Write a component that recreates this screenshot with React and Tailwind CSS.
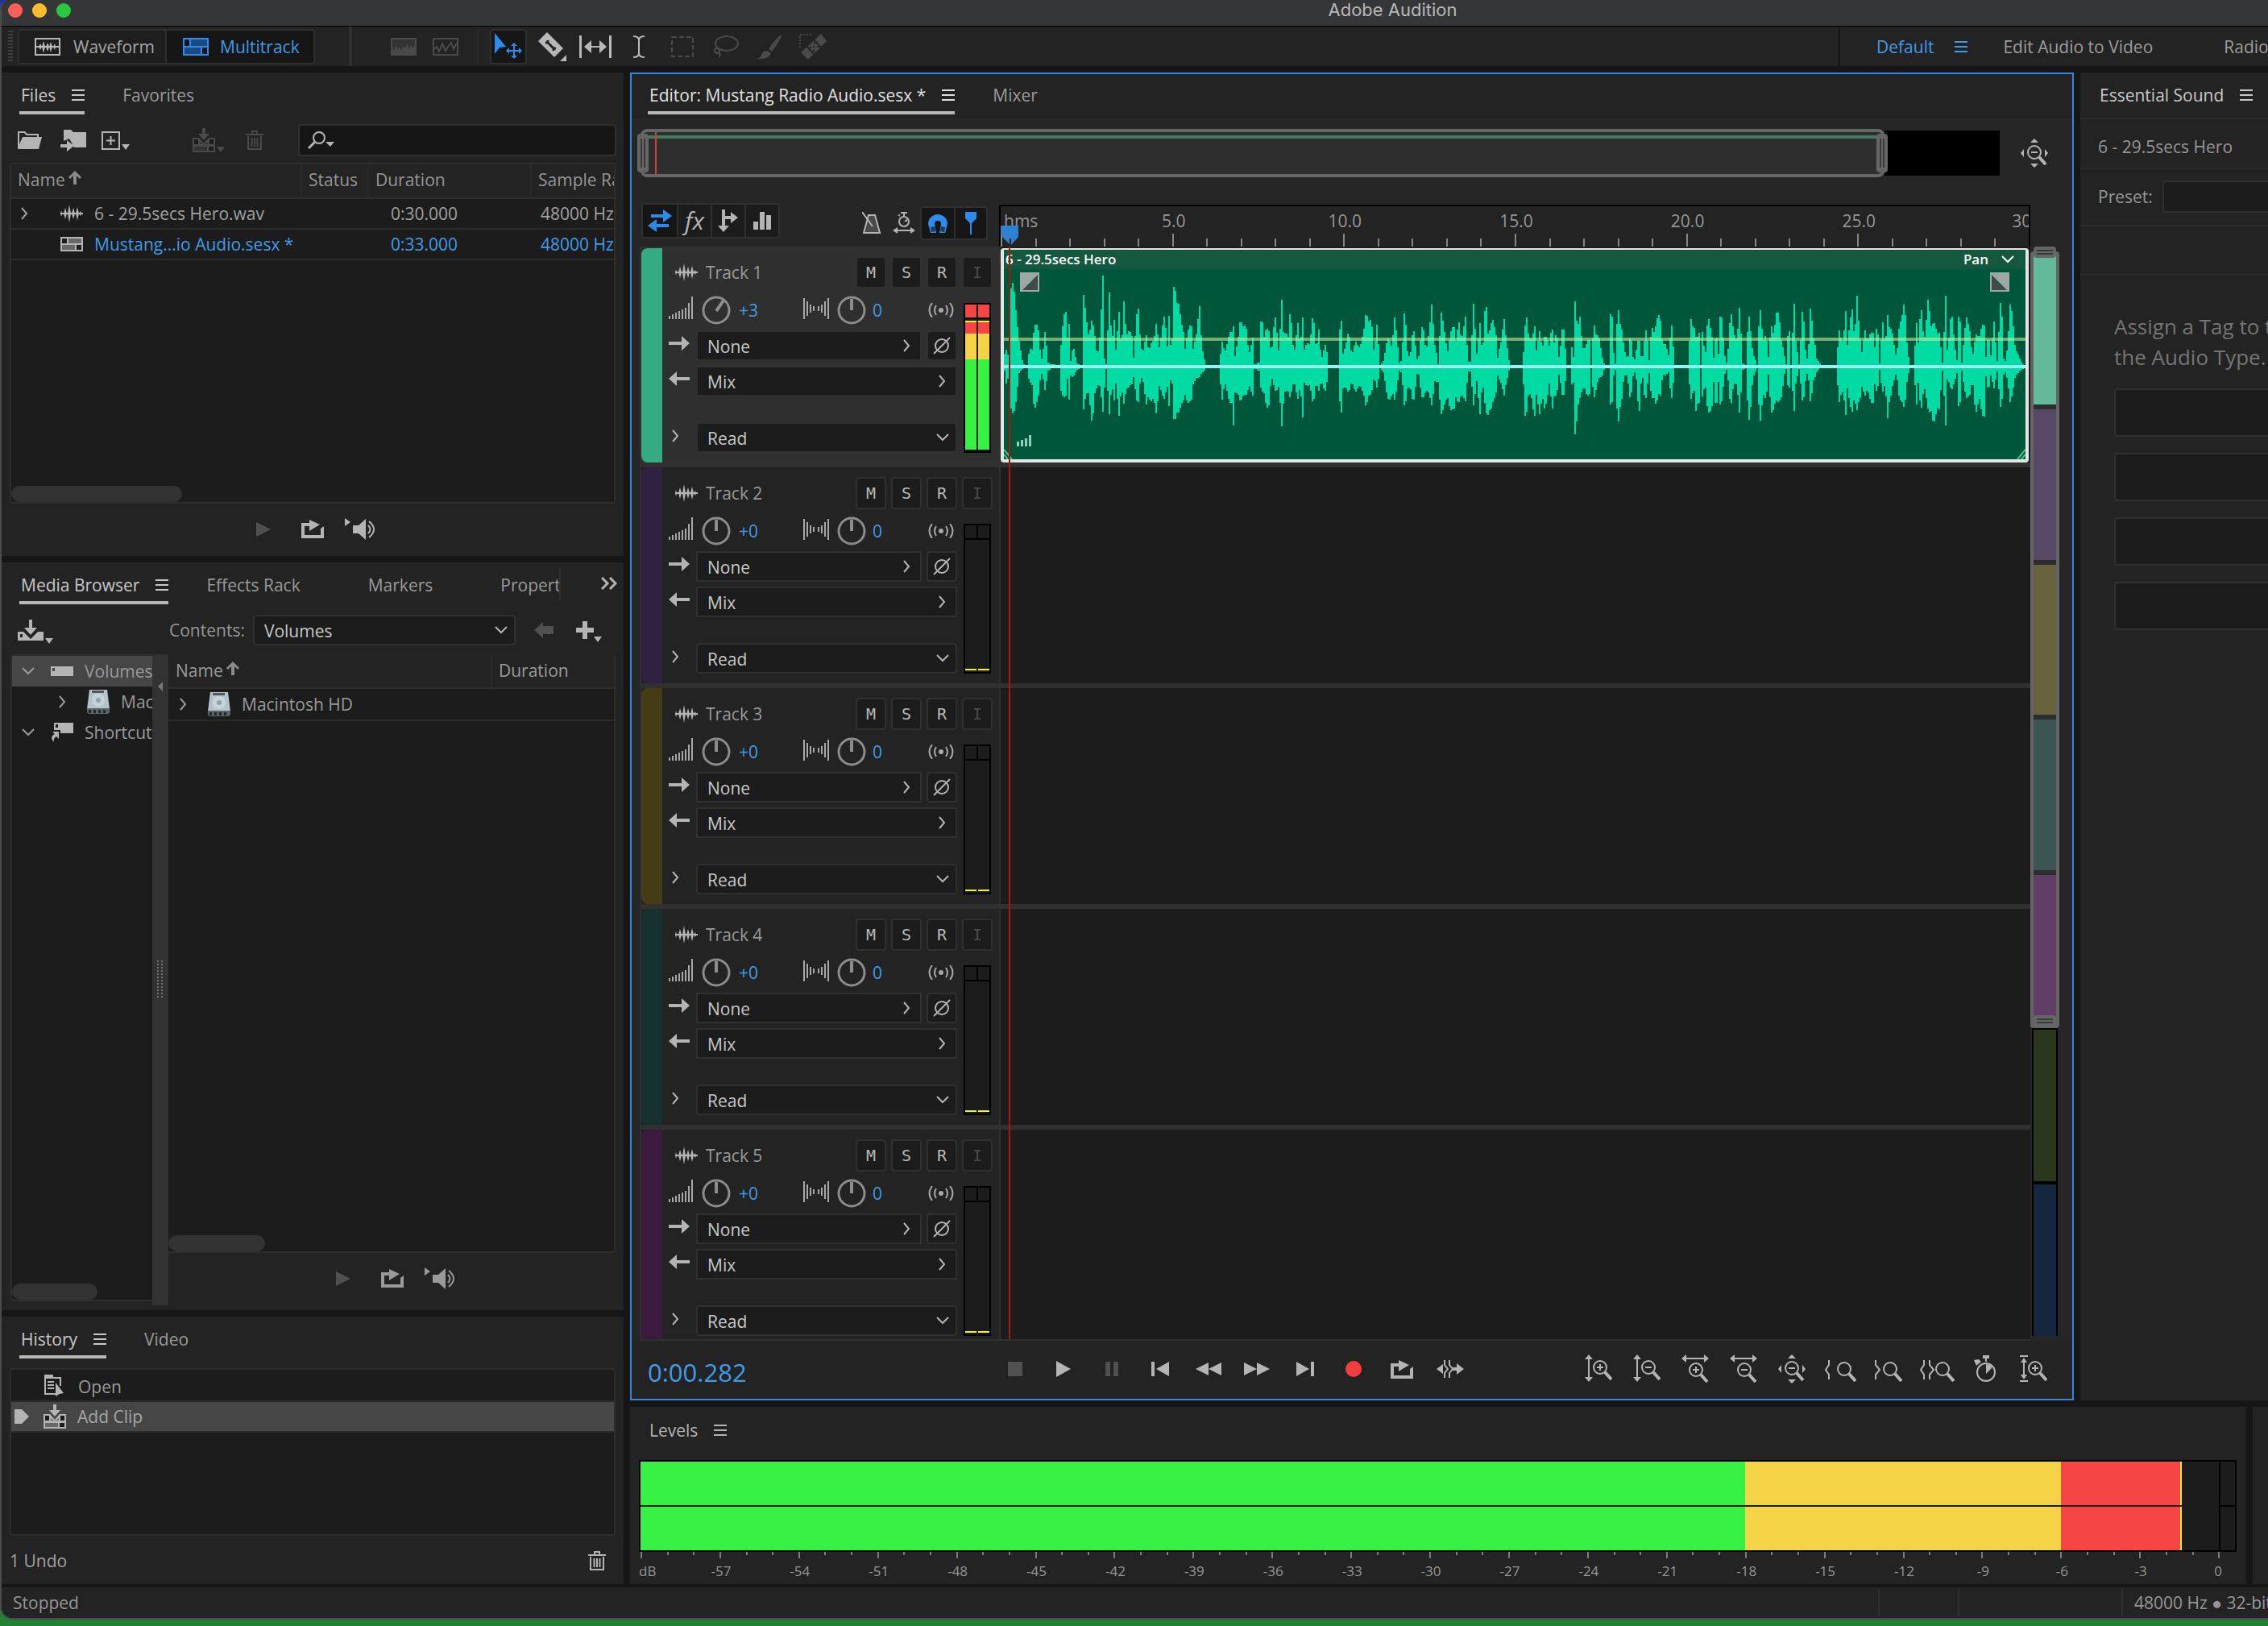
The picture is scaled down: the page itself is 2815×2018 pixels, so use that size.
import React from 'react';
import clsx from 'clsx';

const SANS = "font-['Open_Sans','Noto_Sans',sans-serif]";

// x, height above the centre line, height below it
const WAVE = [
    0, 18, 5, 2, 20, 20, 6, 8, 8, 8, 103, 55, 11, 95, 55, 15, 65, 42, 17, 35, 8, 23, 3, 2, 29, 1, 2, 31, 33, 30, 33, 8, 8,
    37, 55, 60, 39, 52, 45, 43, 40, 30, 45, 5, 6, 48, 20, 15, 51, 52, 34, 53, 5, 5, 59, 3, 2, 69, 1, 1, 70, 25, 28,
    75, 83, 45, 78, 33, 14, 80, 52, 40, 82, 8, 12, 85, 25, 12, 90, 4, 4, 96, 0, 0, 98, 88, 52, 101, 58, 30, 105, 40, 38,
    109, 57, 70, 112, 40, 35, 115, 8, 20, 118, 38, 25, 122, 105, 52, 124, 10, 25, 126, 3, 3, 130, 85, 55, 133, 33, 25,
    136, 55, 40, 138, 20, 20, 142, 70, 63, 145, 12, 20, 148, 87, 50, 151, 35, 25, 157, 50, 25, 160, 10, 12, 165, 82, 52,
    168, 38, 20, 171, 15, 12, 176, 38, 45, 179, 20, 40, 184, 32, 40, 188, 50, 55, 192, 25, 25, 199, 65, 40, 202, 25, 25,
    204, 58, 45, 207, 10, 3, 210, 95, 62, 214, 80, 58, 217, 82, 60, 219, 40, 35, 221, 58, 50, 224, 22, 35, 231, 62, 50,
    234, 20, 20, 238, 42, 15, 242, 70, 12, 245, 25, 8, 249, 3, 3, 251, 0, 0, 267, 0, 0, 269, 33, 45, 273, 18, 20,
    282, 48, 50, 284, 48, 70, 286, 12, 30, 292, 52, 40, 299, 52, 35, 303, 17, 25, 308, 33, 33, 310, 3, 3, 316, 5, 5,
    319, 83, 38, 321, 30, 25, 327, 55, 60, 331, 10, 10, 335, 68, 30, 340, 20, 25, 344, 78, 70, 347, 22, 30, 349, 63, 35,
    351, 20, 25, 355, 76, 40, 359, 10, 15, 364, 58, 43, 367, 20, 20, 370, 63, 65, 372, 22, 20, 379, 32, 25, 383, 63, 45,
    387, 20, 20, 390, 43, 28, 393, 10, 20, 399, 28, 30, 402, 0, 0, 414, 0, 0, 417, 73, 68, 420, 15, 25, 427, 42, 30,
    431, 15, 20, 437, 33, 32, 441, 20, 20, 448, 60, 45, 455, 58, 33, 458, 20, 15, 462, 50, 25, 466, 2, 2, 471, 8, 8,
    475, 38, 42, 480, 25, 35, 484, 60, 40, 490, 5, 5, 493, 8, 8, 497, 87, 63, 499, 20, 25, 503, 10, 25, 507, 48, 45,
    513, 3, 3, 519, 58, 45, 523, 15, 25, 530, 72, 45, 534, 30, 20, 538, 3, 18, 542, 72, 63, 545, 45, 45, 550, 20, 40,
    557, 58, 60, 560, 30, 35, 564, 60, 48, 567, 28, 30, 572, 65, 45, 575, 5, 5, 578, 6, 6, 582, 72, 45, 586, 18, 20,
    590, 50, 55, 593, 15, 20, 597, 82, 50, 600, 42, 62, 606, 55, 42, 609, 52, 42, 612, 10, 10, 620, 55, 33, 627, 0, 0,
    643, 0, 0, 646, 54, 65, 649, 59, 47, 651, 18, 20, 653, 55, 50, 655, 15, 30, 657, 61, 68, 660, 22, 38, 664, 41, 55,
    667, 25, 40, 670, 35, 50, 675, 33, 32, 677, 20, 12, 679, 58, 58, 681, 28, 40, 685, 42, 35, 688, 12, 10, 693, 53, 40,
    697, 12, 10, 698, 0, 0, 702, 0, 0, 705, 38, 35, 706, 12, 20, 708, 75, 78, 710, 54, 65, 714, 61, 38, 717, 22, 25,
    722, 27, 32, 726, 34, 35, 728, 0, 0, 731, 51, 35, 733, 45, 37, 737, 37, 13, 742, 12, 12, 745, 0, 0, 750, 0, 0,
    753, 92, 67, 755, 25, 15, 758, 4, 4, 761, 72, 70, 765, 53, 50, 768, 28, 18, 771, 13, 8, 774, 12, 20, 777, 43, 43,
    781, 2, 2, 785, 26, 20, 787, 42, 72, 791, 2, 2, 795, 46, 50, 797, 40, 25, 800, 8, 8, 803, 55, 43, 805, 35, 30,
    809, 58, 55, 811, 62, 30, 814, 55, 35, 817, 28, 10, 821, 25, 10, 825, 11, 6, 827, 58, 45, 831, 15, 12, 832, 0, 0,
    848, 0, 0, 852, 60, 40, 856, 45, 28, 858, 35, 52, 862, 42, 45, 864, 2, 2, 866, 41, 36, 870, 17, 25, 873, 62, 55,
    877, 48, 60, 880, 10, 18, 883, 47, 60, 886, 15, 18, 889, 81, 58, 892, 35, 25, 895, 0, 0, 897, 10, 8, 901, 66, 48,
    905, 45, 22, 909, 28, 20, 912, 77, 60, 916, 4, 4, 920, 2, 2, 923, 61, 60, 925, 54, 62, 929, 15, 12, 934, 2, 2,
    937, 75, 70, 941, 35, 38, 945, 38, 38, 948, 12, 10, 951, 52, 57, 955, 35, 48, 957, 72, 45, 961, 60, 40, 964, 35, 40,
    968, 12, 8, 970, 3, 3, 973, 62, 37, 976, 2, 2, 980, 82, 58, 982, 30, 20, 986, 3, 3, 991, 78, 48, 993, 30, 25,
    997, 3, 3, 1001, 94, 55, 1003, 28, 15, 1005, 38, 17, 1007, 12, 8, 1014, 0, 0, 1033, 0, 0, 1035, 45, 44, 1041, 30, 30,
    1044, 66, 58, 1046, 30, 30, 1052, 70, 55, 1055, 35, 40, 1058, 82, 50, 1062, 35, 40, 1065, 8, 15, 1067, 55, 43,
    1071, 28, 25, 1077, 50, 54, 1080, 22, 20, 1083, 60, 35, 1086, 4, 4, 1090, 58, 33, 1093, 22, 20, 1096, 62, 62,
    1102, 38, 22, 1107, 11, 8, 1111, 55, 42, 1117, 75, 48, 1121, 18, 12, 1124, 0, 0, 1128, 0, 0, 1132, 50, 44,
    1134, 30, 20, 1137, 77, 55, 1141, 30, 25, 1146, 77, 48, 1151, 50, 65, 1153, 52, 65, 1160, 40, 50, 1164, 5, 5,
    1168, 82, 68, 1170, 20, 15, 1175, 67, 28, 1179, 30, 20, 1182, 8, 8, 1185, 83, 65, 1188, 5, 5, 1194, 65, 42,
    1199, 35, 30, 1201, 12, 15, 1205, 36, 55, 1210, 40, 42, 1216, 53, 65, 1218, 12, 12, 1221, 40, 30, 1224, 15, 12,
    1228, 52, 25, 1232, 8, 6, 1237, 90, 57, 1240, 10, 10, 1243, 5, 5, 1248, 76, 44, 1251, 58, 30, 1255, 20, 10,
    1264, 3, 3, 1268, 0, 0,
];

const wavePath = () => {
    let d = '';
    let i = 0;
    for (let x = 0; x < 1268; x += 2) {
        while (i + 5 < WAVE.length && WAVE[i + 3] <= x) i += 3;
        const t = (x - WAVE[i]) / (WAVE[i + 3] - WAVE[i] || 1);
        const rough = 0.9 + 0.18 * Math.abs(Math.sin(x * 12.9898));
        const up = (WAVE[i + 1] + (WAVE[i + 4] - WAVE[i + 1]) * t) * rough;
        const down = (WAVE[i + 2] + (WAVE[i + 5] - WAVE[i + 2]) * t) * rough;
        d += `M${x + 1} ${Math.round(121 - up)}V${Math.round(121 + down)}`;
    }
    return d;
};

const Icon = ({ w, h, className, children }) => (
    <svg
        width={w}
        height={h}
        viewBox={`0 0 ${w} ${h}`}
        fill="currentColor"
        className={clsx('shrink-0', className)}
        aria-hidden="true"
    >
        {children}
    </svg>
);

const MenuIcon = ({ w = 16, className }) => (
    <Icon w={w} h={14} className={className}>
        <path d={`M0 0h${w}v2H0zM0 6h${w}v2H0zM0 12h${w}v2H0z`} />
    </Icon>
);

const ChevronDown = ({ className }) => (
    <Icon w={16} h={10} className={className}>
        <path d="M1 1l7 7 7-7" fill="none" stroke="currentColor" strokeWidth="2" />
    </Icon>
);

const ChevronRight = ({ className }) => (
    <Icon w={9} h={16} className={className}>
        <path d="M1 1l6 7-6 7" fill="none" stroke="currentColor" strokeWidth="2" />
    </Icon>
);

const SortArrow = () => (
    <Icon w={16} h={17} className="mb-1 text-[#8c8c8c]">
        <path d="M8 0l8 8-2 2-4-4v11H6V6l-4 4-2-2z" />
    </Icon>
);

const WaveIcon = () => (
    <Icon w={28} h={22}>
        <path d="M0 10h28v2H0z" />
        <path d="M0 11l1-4 1 4-1 4zM4 11l2-7 2 7-2 7zM9 11l2-11 2 11-2 11zM14 11l2-7 2 7-2 7zM19 11l2-8 2 8-2 8zM23 11l2-3 1 3-1 3z" />
    </Icon>
);

const SessionIcon = ({ w = 28, h = 18 }) => (
    <Icon w={w} h={h}>
        <path d={`M0 0h${w}v${h}H0z`} />
        <path d={`M2 2h6v${h / 2 - 3}H2zM${w - 8} ${h / 2 + 1}h6v${h / 2 - 3}h-6z`} fill="#1c1c1c" />
        <path d={`M10 2h${w - 12}v${h / 2 - 3}H10zM2 ${h / 2 + 1}h${w - 12}v${h / 2 - 3}H2z`} fill="#1c1c1c" fillOpacity="0.5" />
    </Icon>
);

const InsertClipIcon = () => (
    <Icon w={28} h={30}>
        <path d="M12 0h4v7h5l-7 8-7-8h5z" />
        <path d="M0 12h8l6 7 6-7h8v18H0z" />
        <path d="M2 14h5v6H2zM21 14h5v6h-5zM20 23h6v5h-6z" fill="#1c1c1c" />
        <path d="M2 23h16v5H2zM9 17l5 4 5-4v3H9z" fill="#1c1c1c" fillOpacity="0.5" />
    </Icon>
);

const TrashIcon = ({ className }) => (
    <Icon w={22} h={24} className={className}>
        <path d="M7 0h8v4h7v2H0V4h7zm2 2v2h4V2z" fillRule="evenodd" />
        <path d="M3 7v16h16V7M7.500 9v11M11 9v11M14.500 9v11" fill="none" stroke="currentColor" strokeWidth="2" />
    </Icon>
);

const LoopIcon = () => (
    <Icon w={28} h={23}>
        <path d="M0 4h10V0l13 6-13 8V8H4v11h20v-8l4-3v15H0z" />
    </Icon>
);

const Magnifier = ({ x = 0, y = 0, sign }) => (
    <g transform={`translate(${x} ${y})`} fill="none" stroke="currentColor">
        <circle cx="9" cy="9" r="8" strokeWidth="2" />
        <path d="M15 15l8 9" strokeWidth="4" />
        {sign && <path d={sign === '+' ? 'M5 9h8M9 5v8' : 'M5 9h8'} strokeWidth="2" />}
    </g>
);

const ZoomOutFull = () => (
    <Icon w={34} h={36}>
        <path d="M17 0l5 5H12zM17 36l5-5H12zM0 18l4-5v10zM34 18l-4-5v10z" />
        <Magnifier x={8} y={8} sign="-" />
    </Icon>
);

const DriveIcon = () => (
    <Icon w={28} h={30}>
        <path d="M3 0h22l3 24H0z" fill="#b4c2cb" />
        <path d="M0 23h28v5l-2 2H2l-2-2z" fill="#5b6469" />
        <path d="M6 1h15v3H6z" fill="#55565e" />
        <circle cx="14" cy="13" r="8" fill="#c6d3da" />
        <circle cx="14" cy="13" r="3" fill="#93a2ac" />
        <path d="M2 25h3v4H2zM8 25h3v4H8zM14 25h3v4h-3zM20 25h3v4h-3z" fill="#23272a" />
    </Icon>
);

const Triangle = ({ className }) => (
    <Icon w={10} h={7} className={className}>
        <path d="M0 0h10L5 7z" />
    </Icon>
);

const Tabs = ({ items, bright }) => (
    <div className="flex h-14 shrink-0 items-start gap-[45px] overflow-hidden pl-[22px]">
        {items.map((item, i) => (
            <button
                key={item}
                type="button"
                className={clsx(
                    'flex shrink-0 items-center gap-5 border-b-4 pt-3.5 pb-1.5 pl-0.5 text-[21px] leading-7 whitespace-nowrap',
                    i === 0 ? 'border-[#b8b8b8]' : 'border-transparent pr-[37px] text-[#9a9a9a]',
                    i === 0 && (bright ? 'text-[#e0e0e0]' : 'text-[#c8c8c8]')
                )}
            >
                {item}
                {i === 0 && <MenuIcon />}
            </button>
        ))}
    </div>
);

const Preview = () => (
    <div className="flex h-[65px] shrink-0 items-center justify-center pb-0.5 pl-2.5">
        <button type="button" aria-label="Play" className="text-[#505050]">
            <Icon w={18} h={18}><path d="M0 0l18 9-18 9z" /></Icon>
        </button>
        <button type="button" aria-label="Loop" className="ml-[38px]"><LoopIcon /></button>
        <button type="button" aria-label="Auto-play" className="ml-[26px]">
            <Icon w={40} h={27}>
                <path d="M0 0l7 5-7 5zM10 9h7l9-8v26l-9-8h-7z" />
                <path d="M29 9q5 5 0 10M30 4q12 10 0 20" fill="none" stroke="currentColor" strokeWidth="2" />
            </Icon>
        </button>
    </div>
);

const Dropdown = ({ label, value, popup, rounded, className }) => (
    <div className={clsx('relative', className)}>
        <select
            aria-label={label}
            defaultValue={value}
            className={clsx(
                'h-[38px] w-full appearance-none border-2 border-[#303030] bg-[#1c1c1c] pt-0.5 pl-3 text-[21px] leading-7 text-[#c8c8c8]',
                rounded && 'rounded'
            )}
        >
            <option>{value}</option>
        </select>
        <span className="pointer-events-none absolute inset-y-0 right-2.5 flex items-center">
            {popup ? <ChevronRight className="mr-1" /> : <ChevronDown />}
        </span>
    </div>
);

const TopToolbar = () => {
    const tools = [
        ['Move', <Icon w={34} h={34}><path d="M0 0l14 17-8 1-6 8zM24 12l4 4h-3v5h5v-3l4 4-4 4v-3h-5v5h3l-4 4-4-4h3v-5h-5v3l-4-4 4-4v3h5v-5h-3z" /></Icon>],
        ['Razor', <Icon w={36} h={36}><path d="M12 0l20 20-11 11L1 11z" /><path d="M13 10v3l7 7h3M10 13h3M20 20v3" fill="none" stroke="#232323" strokeWidth="3" /><path d="M36 28v8h-8z" /></Icon>],
        ['Slip', <Icon w={40} h={28}><path d="M0 0h3v28H0zM37 0h3v28h-3zM6 14l9-8v7h10V6l9 8-9 8v-7H15v7z" /></Icon>],
        ['Time Selection', <Icon w={16} h={28}><path d="M1 1q7 0 7 5v16q0 5-7 5M15 1q-7 0-7 5M8 22q0 5 7 5" fill="none" stroke="currentColor" strokeWidth="2" /></Icon>],
        ['Marquee', <Icon w={28} h={26}><path d="M1 1h26v24H1z" fill="none" stroke="currentColor" strokeWidth="2" strokeDasharray="6 3" /></Icon>],
        ['Lasso', <Icon w={34} h={28}><ellipse cx="18" cy="10" rx="14" ry="9" fill="none" stroke="currentColor" strokeWidth="2" /><circle cx="6" cy="19" r="3" fill="none" stroke="currentColor" strokeWidth="2" /><path d="M7 21q4 2 2 6" fill="none" stroke="currentColor" strokeWidth="2" /></Icon>],
        ['Brush', <Icon w={32} h={32}><path d="M32 0q-2 8-13 22l-4-3Q24 5 32 0zM13 21l5 3q-2 8-18 7 5-1 6-5 2-5 7-5z" /></Icon>],
        ['Spot Healing', <Icon w={34} h={32}><path d="M27 0l7 9L11 32 2 23z" /><path d="M18 7l9 10M9 15l9 10" stroke="#232323" strokeWidth="2" /><path d="M18 11h2v2h-2zM22 15h2v2h-2zM13 16h2v2h-2zM17 20h2v2h-2zM17 15h2v2h-2z" fill="#232323" /><path d="M1 17V1h16" fill="none" stroke="currentColor" strokeWidth="2" strokeDasharray="2 2" /></Icon>],
    ];
    return (
        <div className="flex h-[49px] shrink-0 items-center overflow-hidden bg-[#232323] text-[21px] leading-7 whitespace-nowrap">
            <svg width="6" height="40" className="ml-2 shrink-0 text-[#3f3f3f]" aria-hidden="true">
                <path d="M3 0v40" stroke="currentColor" strokeWidth="6" strokeDasharray="2 2" />
            </svg>
            <div className="ml-1.5 flex h-11 shrink-0 rounded border-2 border-[#303030]">
                <button type="button" className="flex w-[181px] items-center gap-4 bg-[#1e1e1e] pl-[19px] text-[#a6a6a6]">
                    <Icon w={32} h={22} className="text-[#b8b8b8]">
                        <path d="M1 1h30v20H1z" fill="none" stroke="currentColor" strokeWidth="2" />
                        <path d="M2 10h28v2H2z" />
                        <path d="M5 11l2-4 2 4-2 4zM9 11l2-7 2 7-2 8zM14 11l2-5 2 5-2 6zM18 11l2-6 2 6-2 7zM23 11l2-4 1 4-1 4z" />
                    </Icon>
                    Waveform
                </button>
                <button type="button" className="flex w-[184px] items-center gap-3.5 border-l-2 border-[#303030] bg-[#161616] pl-5 text-[#3f9be6]">
                    <Icon w={32} h={22} className="text-[#2d8ceb]">
                        <path d="M0 0h32v22H0z" />
                        <path d="M2 2h6v8H2zM24 12h6v8h-6z" fill="#161616" />
                        <path d="M10 2h20v8H10zM2 12h20v8H2z" fill="#1a4a80" />
                    </Icon>
                    Multitrack
                </button>
            </div>
            <div className="ml-[42px] h-full w-1 shrink-0 bg-[#2f2f2f]" />
            <button type="button" aria-label="Spectral frequency" className="ml-12 text-[#4a4a4a]">
                <Icon w={32} h={22}>
                    <path d="M1 1h30v20H1z" fill="#333" stroke="currentColor" strokeWidth="2" />
                    <path d="M2 20v-9l2 5 2-7 3 6 2-4 2 5 3-6 2 4 2-8 3 8 2-6 2 5 3-4v11z" />
                </Icon>
            </button>
            <button type="button" aria-label="Spectral pitch" className="ml-5 text-[#4a4a4a]">
                <Icon w={32} h={22}>
                    <path d="M1 1h30v20H1zM2 14l3-3 3 6 4-10 4 9 3-5 4-5 3 8 4-8" fill="none" stroke="currentColor" strokeWidth="2" />
                </Icon>
            </button>
            <div className="ml-[23px] h-[41px] w-0.5 shrink-0 bg-[#2b2b2b]" />
            <div className="ml-2.5 flex">
                {tools.map(([name, icon], i) => (
                    <button
                        key={name}
                        type="button"
                        aria-label={name}
                        className={clsx(
                            'mx-1 flex h-11 w-[46px] items-center justify-center rounded border-2',
                            i === 0 ? 'border-[#303030] bg-[#161616] text-[#2d8ceb]' : 'border-transparent',
                            i > 3 ? 'text-[#4a4a4a]' : i > 0 && 'text-[#b8b8b8]'
                        )}
                    >
                        {icon}
                    </button>
                ))}
            </div>
            <nav className="ml-auto flex h-full w-[533px] shrink-0 items-center overflow-hidden border-l-2 border-[#161616] pl-[45px] text-[#9c9c9c]">
                <a href="#default" className="text-[#3f9be6]">Default</a>
                <MenuIcon className="ml-[26px] text-[#3f9be6]" />
                <a href="#video" className="ml-11">Edit Audio to Video</a>
                <a href="#radio" className="ml-[88px]">Radio Production</a>
            </nav>
        </div>
    );
};

const FilesPanel = () => (
    <section className="flex h-[600px] shrink-0 flex-col bg-[#232323]">
        <Tabs items={['Files', 'Favorites']} />
        <div className="flex h-14 shrink-0 items-center pr-[9px] pl-5">
            <button type="button" aria-label="Open file">
                <Icon w={30} h={22}><path d="M0 0h9l3 3h14v4h-2V5H11L8 2H2v14L6 7h24l-4 15H0z" /></Icon>
            </button>
            <button type="button" aria-label="Import file" className="ml-[23px]">
                <Icon w={32} h={27}><path d="M4 0h9l3 3h16v19H17l-1-2-5-9-7 3zM0 18h8v-5l9 7-9 7v-5H0z" /></Icon>
            </button>
            <button type="button" aria-label="New file" className="ml-[19px] flex items-end gap-0.5">
                <Icon w={23} h={23}><path d="M1 1h21v21H1zM6 11.500h11M11.500 6v11" fill="none" stroke="currentColor" strokeWidth="2" /></Icon>
                <Triangle />
            </button>
            <button type="button" aria-label="Insert into multitrack" className="ml-[78px] flex items-end gap-0.5 text-[#4a4a4a]">
                <InsertClipIcon />
                <Triangle />
            </button>
            <button type="button" aria-label="Delete" className="ml-[26px] text-[#4a4a4a]"><TrashIcon /></button>
            <div className="relative ml-[43px] flex-1">
                <input type="text" aria-label="Search files" className="h-10 w-full rounded border-2 border-[#303030] bg-[#161616] pl-14 text-[21px]" />
                <span className="pointer-events-none absolute inset-y-0 left-3 flex items-center">
                    <Icon w={34} h={22}>
                        <circle cx="14" cy="8" r="7" fill="none" stroke="currentColor" strokeWidth="2" />
                        <path d="M9 13l-8 8" stroke="currentColor" strokeWidth="3" />
                        <path d="M22 13h11l-5 6z" />
                    </Icon>
                </span>
            </div>
        </div>
        <div className="mx-2.5 flex min-h-0 flex-1 flex-col overflow-hidden rounded border-2 border-[#2e2e2e] bg-[#1c1c1c] text-[21px] leading-7">
            <table className="w-full table-fixed text-left whitespace-nowrap">
                <colgroup>
                    <col className="w-[360px]" />
                    <col className="w-[83px]" />
                    <col className="w-[202px]" />
                    <col />
                </colgroup>
                <thead>
                    <tr className="h-[42px] border-b-2 border-[#2e2e2e] bg-[#232323] text-[#969696]">
                        <th className="pb-1 pl-2 font-normal"><span className="flex items-center gap-1">Name <SortArrow /></span></th>
                        <th className="border-l-2 border-[#2a2a2a] pb-1 pl-2 font-normal">Status</th>
                        <th className="border-l-2 border-[#2a2a2a] pb-1 pl-2 font-normal">Duration</th>
                        <th className="overflow-hidden border-l-2 border-[#2a2a2a] pb-1 pl-2 font-normal">Sample Rate</th>
                    </tr>
                </thead>
                <tbody className="text-[#a0a0a0]">
                    <tr className="h-[38px] border-b-2 border-[#2a2a2a]">
                        <td className="pl-3">
                            <span className="flex items-center">
                                <ChevronRight /><span className="mr-3.5 ml-10 text-[#b4b4b4]"><WaveIcon /></span>6 - 29.5secs Hero.wav
                            </span>
                        </td>
                        <td />
                        <td className="pl-7">0:30.000</td>
                        <td className="overflow-hidden pl-3">48000 Hz</td>
                    </tr>
                    <tr className="h-[38px] border-b-2 border-[#2a2a2a] text-[#3f9be6]">
                        <td className="pl-[61px]">
                            <span className="flex items-center">
                                <span className="mr-3.5 text-[#b4b4b4]"><SessionIcon /></span>Mustang...io Audio.sesx *
                            </span>
                        </td>
                        <td />
                        <td className="pl-7">0:33.000</td>
                        <td className="overflow-hidden pl-3">48000 Hz</td>
                    </tr>
                </tbody>
            </table>
            <div className="mt-auto h-5 w-[212px] rounded-full bg-[#323232]" />
        </div>
        <Preview />
    </section>
);

const MediaBrowser = () => (
    <section className="flex min-h-0 flex-1 flex-col bg-[#232323]">
        <div className="flex shrink-0 items-start justify-between pr-2">
            <div className="flex w-[692px] overflow-hidden">
                <Tabs items={['Media Browser', 'Effects Rack', 'Markers', 'Properties']} />
            </div>
            <div className="mt-2 h-10 w-0.5 bg-[#303030]" />
            <button type="button" aria-label="More panels" className="mt-[18px] ml-auto">
                <Icon w={20} h={16}><path d="M1 1l7 7-7 7M11 1l7 7-7 7" fill="none" stroke="currentColor" strokeWidth="3" /></Icon>
            </button>
        </div>
        <div className="flex h-[58px] shrink-0 items-center pb-0.5 pl-5 text-[21px] leading-7">
            <button type="button" aria-label="Import" className="flex items-end gap-0.5">
                <Icon w={32} h={26}><path d="M14 0h4v10h6l-8 9-8-9h6zM0 15h7l9 9 9-9h7v11H0zM3 18v4h3v-4z" fillRule="evenodd" /></Icon>
                <Triangle className="-mb-1" />
            </button>
            <span className="ml-36 text-[#969696]">Contents:</span>
            <Dropdown label="Contents" value="Volumes" rounded className="ml-2.5 w-[326px]" />
            <button type="button" aria-label="Back" className="ml-[23px] text-[#505050]">
                <Icon w={24} h={20}><path d="M0 10L11 0v5h13v10H11v5z" /></Icon>
            </button>
            <button type="button" aria-label="Add shortcut" className="ml-7 flex items-end">
                <Icon w={22} h={22}><path d="M8 0h6v8h8v6h-8v8H8v-8H0V8h8z" /></Icon>
                <Triangle className="-mb-1" />
            </button>
        </div>
        <div className="mb-1.5 flex min-h-0 flex-1 pr-2.5 pl-[11px] text-[21px] leading-7 text-[#9a9a9a]">
            <div className="mb-[5px] flex w-[176px] flex-col overflow-hidden rounded-l border-2 border-r-0 border-[#2e2e2e] bg-[#1c1c1c]">
                <ul className="whitespace-nowrap">
                    <li className="flex h-[38px] items-center bg-[#464646] pl-3">
                        <ChevronDown />
                        <span className="mr-3.5 ml-5 text-[#b4b4b4]"><Icon w={28} h={12}><path d="M0 0h28v12H0zM2 2v4h3V2z" fillRule="evenodd" /></Icon></span>
                        Volumes
                    </li>
                    <li className="flex h-[38px] items-center pl-[58px]">
                        <ChevronRight />
                        <span className="mr-3.5 ml-[26px]"><DriveIcon /></span>
                        Macintosh HD
                    </li>
                    <li className="flex h-[38px] items-center pl-3">
                        <ChevronDown />
                        <span className="mr-3.5 ml-5 text-[#b4b4b4]">
                            <Icon w={28} h={24}>
                                <path d="M4 0h24v13H12V9H4zM6 2v4h3V2z" fillRule="evenodd" />
                                <path d="M2 11h8v9l-3-3q-4 2-3 7-6-6 1-10z" />
                            </Icon>
                        </span>
                        Shortcuts
                    </li>
                </ul>
                <div className="mt-auto h-5 w-[106px] rounded-full bg-[#323232]" />
            </div>
            <div className="flex w-5 shrink-0 flex-col items-center bg-[#323232] pb-12">
                <Icon w={6} h={12} className="mt-[34px] text-[#777]"><path d="M6 0v12L0 6z" /></Icon>
                <svg width="8" height="46" className="my-auto text-[#707070]" aria-hidden="true">
                    <path d="M1 0v46M6 0v46" stroke="currentColor" strokeWidth="2" strokeDasharray="2 2" />
                </svg>
            </div>
            <div className="flex min-w-0 flex-1 flex-col">
                <div className="flex min-h-0 flex-1 flex-col rounded-r border-r-2 border-b-2 border-[#2e2e2e] bg-[#1c1c1c]">
                    <table className="w-full table-fixed text-left whitespace-nowrap">
                        <colgroup>
                            <col className="w-[401px]" />
                            <col />
                        </colgroup>
                        <thead>
                            <tr className="h-[42px] border-b-2 border-[#2e2e2e] bg-[#232323]">
                                <th className="pb-0.5 pl-[9px] font-normal"><span className="flex items-center gap-1">Name <SortArrow /></span></th>
                                <th className="border-l-2 border-[#2a2a2a] pb-0.5 pl-2 font-normal">Duration</th>
                            </tr>
                        </thead>
                        <tbody>
                            <tr className="h-10 border-b-2 border-[#2a2a2a]">
                                <td className="pl-3.5">
                                    <span className="flex items-center">
                                        <ChevronRight /><span className="mr-3.5 ml-[26px]"><DriveIcon /></span>Macintosh HD
                                    </span>
                                </td>
                                <td />
                            </tr>
                        </tbody>
                    </table>
                    <div className="mt-auto h-5 w-[120px] rounded-full bg-[#323232]" />
                </div>
                <Preview />
            </div>
        </div>
    </section>
);

const HistoryPanel = () => (
    <section className="flex h-[332px] shrink-0 flex-col bg-[#232323]">
        <Tabs items={['History', 'Video']} />
        <ul className="mx-2.5 mt-2 flex-1 rounded border-2 border-[#2e2e2e] bg-[#1c1c1c] text-[21px] leading-7 text-[#9a9a9a]">
            <li className="flex h-10 items-center border-b-2 border-[#2a2a2a] pt-1 pl-[41px]">
                <Icon w={26} h={27} className="mr-4 mb-1 text-[#b4b4b4]">
                    <path d="M0 0h11v3h10v11h-2V5H2v18h12v2H0z" />
                    <path d="M4 8h8v2H4zM4 12h8v2H4zM4 16h8v2H4zM14 10l10 13-5 1-5 3z" />
                </Icon>
                Open
            </li>
            <li className="flex h-[38px] items-center border-b-2 border-[#2a2a2a] bg-[#464646] pl-1 font-medium text-[#a6a6a6]">
                <Icon w={18} h={18} className="mr-[18px] text-[#b4b4b4]"><path d="M0 0h9l9 9-9 9H0z" /></Icon>
                <span className="mr-3.5 text-[#b4b4b4]"><InsertClipIcon /></span>
                Add Clip
            </li>
        </ul>
        <div className="flex h-[60px] shrink-0 items-center justify-between pt-0.5 pr-[22px] pl-2.5 text-[21px] leading-7 text-[#a0a0a0]">
            1 Undo
            <button type="button" aria-label="Delete history" className="text-[#b4b4b4]"><TrashIcon /></button>
        </div>
    </section>
);

const Knob = ({ label, turned }) => (
    <button type="button" aria-label={label} className="text-[#8c8c8c]">
        <Icon w={36} h={36}>
            <circle cx="18" cy="18" r="16" fill="none" stroke="currentColor" strokeWidth="3" />
            <path d={turned ? 'M18 19l9-13' : 'M18 18V4'} stroke="currentColor" strokeWidth="4" />
        </Icon>
    </button>
);

const TrackMeter = ({ active }) => (
    <div className="flex h-[186px] w-[34px] flex-col border-2 border-black bg-[#1c1c1c]">
        <div className="flex h-[18px] shrink-0 border-b-2 border-black">
            <div className={clsx('flex-1 border-r-2 border-black', active && 'bg-[#f54545]')} />
            <div className={clsx('flex-1', active && 'bg-[#f54545]')} />
        </div>
        {active ? (
            <div className="mt-0.5 flex flex-1 gap-0.5 pb-0.5">
                {[0, 1].map((c) => (
                    <div key={c} className="flex flex-1 flex-col">
                        <div className="h-0.5 bg-[#f7f032]" />
                        <div className="h-3.5 bg-[#f54545]" />
                        <div className="h-8 bg-[#f4d346]" />
                        <div className="flex-1 bg-[#36f044]" />
                    </div>
                ))}
            </div>
        ) : (
            <div className="mt-auto mb-0.5 flex gap-0.5">
                <div className="h-0.5 flex-1 bg-[#f7f032]" />
                <div className="h-0.5 flex-1 bg-[#f7f032]" />
            </div>
        )}
    </div>
);

const TrackHead = ({ track }) => (
    <div
        className={clsx(
            'flex w-[448px] shrink-0 border-x-2 border-[#303030]',
            track.active ? 'bg-[#2f2f2f]' : 'bg-[#232323]'
        )}
    >
        <div className={clsx('w-[26px] shrink-0 rounded-l-lg', track.active && 'mt-0.5', track.strip)} />
        <div className="flex flex-1 flex-col pt-3 pr-2 pl-2">
            <div className="flex h-10 items-center">
                <span className="ml-2 text-[#b4b4b4]"><WaveIcon /></span>
                <span className="ml-2.5 text-[21px] leading-7 text-[#999]">{track.name}</span>
                <div className="ml-auto flex gap-1.5">
                    {['M', 'S', 'R', 'I'].map((b) => (
                        <button
                            key={b}
                            type="button"
                            className={clsx(
                                "h-10 w-[38px] rounded border-2 border-[#303030] bg-[#1c1c1c] font-['DejaVu_Sans_Mono',monospace] text-xl",
                                b === 'I' ? 'text-[#4a4a4a]' : 'text-[#b8b8b8]'
                            )}
                        >
                            {b}
                        </button>
                    ))}
                </div>
            </div>
            <div className="flex">
                <div className="flex-1 pr-2">
                    <div className="mt-[9px] flex h-9 items-center text-[21px] leading-7 text-[#3f9be6]">
                        <Icon w={30} h={28} className="mb-1.5 text-[#a8a8a8]">
                            <path d="M0 24h2v4H0zM4 22h2v6H4zM8 20h2v8H8zM12 18h2v10h-2zM16 16h2v12h-2zM20 14h2v14h-2zM24 8h2v20h-2zM28 0h2v28h-2z" />
                        </Icon>
                        <span className="ml-[11px] flex"><Knob label={`${track.name} volume`} turned={track.active} /></span>
                        <span className="ml-2.5 w-20">{track.volume}</span>
                        <Icon w={32} h={26} className="mb-1 text-[#a8a8a8]">
                            <path d="M0 0h2v26H0zM4 4h2v18H4zM8 8h2v10H8zM12 10h2v6h-2zM18 10h2v6h-2zM22 8h2v10h-2zM26 4h2v18h-2zM30 0h2v26h-2z" />
                        </Icon>
                        <span className="ml-2.5 flex"><Knob label={`${track.name} pan`} /></span>
                        <span className="ml-2">0</span>
                        <Icon w={32} h={18} className="mr-1 ml-auto text-[#a8a8a8]">
                            <circle cx="16" cy="9" r="3" />
                            <path d="M10 3q-4 6 0 12M22 3q4 6 0 12M5 0q-7 9 0 18M27 0q7 9 0 18" fill="none" stroke="currentColor" strokeWidth="2" />
                        </Icon>
                    </div>
                    <div className="mt-[7px] flex items-center text-[#b4b4b4]">
                        <Icon w={26} h={18} className="mb-1.5"><path d="M0 7h16V0l10 9-10 9v-7H0z" /></Icon>
                        <Dropdown label={`${track.name} input`} value="None" popup className="ml-2 flex-1" />
                        <button type="button" aria-label="Invert phase" className="ml-1.5 flex h-[38px] w-[38px] items-center justify-center rounded border-2 border-[#303030] bg-[#1c1c1c]">
                            <Icon w={22} h={22}>
                                <circle cx="11" cy="11" r="8" fill="none" stroke="currentColor" strokeWidth="2" />
                                <path d="M1 21L21 1" stroke="currentColor" strokeWidth="2" />
                            </Icon>
                        </button>
                    </div>
                    <div className="mt-1.5 flex items-center text-[#b4b4b4]">
                        <Icon w={26} h={18} className="mb-1.5"><path d="M26 7H10V0L0 9l10 9v-7h16z" /></Icon>
                        <Dropdown label={`${track.name} output`} value="Mix" popup className="ml-2 flex-1" />
                    </div>
                    <div className="mt-8 flex items-center text-[#b4b4b4]">
                        <ChevronRight className="mb-1 ml-1" />
                        <Dropdown label={`${track.name} automation`} value="Read" rounded className="ml-[21px] flex-1" />
                    </div>
                </div>
                <div className="mt-[18px] mr-0.5"><TrackMeter active={track.active} /></div>
            </div>
        </div>
    </div>
);

const Clip = () => (
    <div className="flex flex-1 flex-col overflow-hidden rounded border-x-4 border-t-2 border-b-4 border-[#e2e6e4] bg-[#00563b]">
        <div className="flex h-6 items-center bg-[#14583f] px-0.5 text-[17px] leading-6 font-semibold text-white">
            6 - 29.5secs Hero
            <span className="mr-4 ml-auto">Pan</span>
            <ChevronDown className="mr-3" />
        </div>
        <div className="relative flex-1">
            <svg viewBox="0 0 1268 236" preserveAspectRatio="none" className="absolute inset-0 h-full w-full" aria-hidden="true">
                <path d={wavePath()} stroke="#00dba4" strokeWidth="2" fill="none" />
                <path d="M0 87h1268" stroke="#c8e896" strokeOpacity="0.6" strokeWidth="4" />
                <path d="M0 121h1268" stroke="#97f3f2" strokeWidth="4" />
                <path d="M0 224l10 12M0 230l5 6M1268 224l-10 12M1268 230l-5 6" stroke="#4fc193" strokeWidth="2" />
            </svg>
            <div className="absolute top-1 left-5 text-[#9ba8a3]">
                <Icon w={24} h={24}><path d="M0 0h24v24H0z" /><path d="M22 3v19H3z" fill="#3d4a45" /></Icon>
            </div>
            <div className="absolute top-1 right-5 text-[#9ba8a3]">
                <Icon w={24} h={24}><path d="M0 0h24v24H0z" /><path d="M2 3v19h19z" fill="#3d4a45" /></Icon>
            </div>
            <div className="absolute bottom-4 left-4 text-[#8fcfb4]">
                <Icon w={18} h={14}><path d="M0 8h3v6H0zM5 6h3v8H5zM10 4h3v10h-3zM15 0h3v14h-3z" /></Icon>
            </div>
        </div>
    </div>
);

const tracks = [
    { name: 'Track 1', volume: '+3', strip: 'bg-[#36aa82]', active: true },
    { name: 'Track 2', volume: '+0', strip: 'bg-[#2f2142]' },
    { name: 'Track 3', volume: '+0', strip: 'bg-[#433c14]' },
    { name: 'Track 4', volume: '+0', strip: 'bg-[#16302f]' },
    { name: 'Track 5', volume: '+0', strip: 'bg-[#3a1a3d]' },
];

const seconds = Array.from({ length: 30 }, (_, i) => i);

const Ruler = () => (
    <div className="relative h-[52px] flex-1 overflow-hidden border-2 border-b-0 border-black bg-[#232323] text-[21px] leading-7 text-[#969696]">
        <div className="flex h-full">
            {seconds.map((s) => (
                <div key={s} className="relative flex flex-1 items-end">
                    <div className={clsx('w-0.5 bg-[#868686]', s % 5 === 0 ? 'h-4' : 'h-2.5')} />
                    {s > 0 && s % 5 === 0 && (
                        <span className="absolute top-1 left-0.5 -translate-x-1/2">{s}.0</span>
                    )}
                    {s === 29 && <span className="absolute top-1 left-full -translate-x-1/2">30.0</span>}
                </div>
            ))}
        </div>
        <span className="absolute top-1 left-1">hms</span>
        <Icon w={22} h={24} className="absolute bottom-0.5 left-0 text-[#2f80d0]">
            <path d="M0 0h22v14l-9 10V16h-2v7L0 12z" />
        </Icon>
    </div>
);

const headTools = [
    <Icon w={30} h={28}><path d="M4 6h15V0l11 8-11 8v-6H4zM26 18H11v-6L0 20l11 8v-6h15z" /></Icon>,
    <span className="text-3xl leading-8 italic">fx</span>,
    <Icon w={26} h={28}><path d="M5 0h4v8h7V3l9 7-9 7v-5H9v8h5l-7 8-7-8h5z" /></Icon>,
    <Icon w={22} h={22}><path d="M0 12h6v10H0zM8 0h6v22H8zM16 4h6v18h-6z" /></Icon>,
];

const zoomTools = [
    <Icon w={34} h={36}><path d="M5 0l5 6H6v22h4l-5 6-5-6h4V6H0z" /><Magnifier x={10} y={7} sign="+" /></Icon>,
    <Icon w={34} h={36}><path d="M5 0l5 6H6v22h4l-5 6-5-6h4V6H0z" /><Magnifier x={10} y={7} sign="-" /></Icon>,
    <Icon w={34} h={36}><path d="M0 5l6-5v4h22V0l6 5-6 5V6H6v4z" /><Magnifier x={9} y={10} sign="+" /></Icon>,
    <Icon w={34} h={36}><path d="M0 5l6-5v4h22V0l6 5-6 5V6H6v4z" /><Magnifier x={9} y={10} sign="-" /></Icon>,
    <ZoomOutFull />,
    <Icon w={40} h={32}><path d="M6 5v6l-4 6 4 6v6" fill="none" stroke="currentColor" strokeWidth="2" /><Magnifier x={16} y={7} /></Icon>,
    <Icon w={36} h={32}><path d="M2 5v6l5 6-5 6v6" fill="none" stroke="currentColor" strokeWidth="2" /><Magnifier x={11} y={7} /></Icon>,
    <Icon w={44} h={32}><path d="M6 5v6l-4 6 4 6v6M13 5v6l5 6-5 6v6" fill="none" stroke="currentColor" strokeWidth="2" /><Magnifier x={20} y={7} /></Icon>,
    <Icon w={28} h={34}><circle cx="15" cy="21" r="11" fill="none" stroke="currentColor" strokeWidth="2" /><path d="M11 0h8v4h-3v4h-2V4h-3zM15 11q8 1 7 5l-7 7zM0 6l6-1 3 3-6 5z" /></Icon>,
    <Icon w={34} h={36}><path d="M0 1h10v2H0zM0 32h10v2H0zM5 4l4 6H6v15h3l-4 6-4-6h3V10H1z" /><Magnifier x={10} y={8} sign="+" /></Icon>,
];

const transport = [
    ['Stop', <Icon w={18} h={18}><path d="M0 0h18v18H0z" /></Icon>, 'text-[#505050]'],
    ['Play', <Icon w={18} h={20}><path d="M0 0l18 10L0 20z" /></Icon>],
    ['Pause', <Icon w={16} h={18}><path d="M0 0h6v18H0zM10 0h6v18h-6z" /></Icon>, 'text-[#505050]'],
    ['Go to start', <Icon w={22} h={18}><path d="M0 0h4v18H0zM22 0v18L6 9z" /></Icon>],
    ['Rewind', <Icon w={32} h={16}><path d="M16 0v16L0 8zM32 0v16L16 8z" /></Icon>],
    ['Fast forward', <Icon w={32} h={16}><path d="M0 0v16l16-8zM16 0v16l16-8z" /></Icon>],
    ['Go to end', <Icon w={22} h={18}><path d="M18 0h4v18h-4zM0 0v18l16-9z" /></Icon>],
    ['Record', <Icon w={20} h={20}><circle cx="10" cy="10" r="10" /></Icon>, 'text-[#f43d3d]'],
    ['Loop', <LoopIcon />],
    ['Skip selection', <Icon w={34} h={22}><path d="M10 0v6l4 5-4 5v6M16 0v6l4 5-4 5v6" fill="none" stroke="currentColor" strokeWidth="2" /><path d="M8 5v12l-8-6zM25 9V4l9 7-9 7v-5h-5V9z" /></Icon>],
];

const EditorPanel = () => (
    <section className="flex min-w-0 flex-1 flex-col bg-[#232323] ring-2 ring-[#3486dc] ring-inset">
        <Tabs items={['Editor: Mustang Radio Audio.sesx *', 'Mixer']} bright />
        <div className="mx-0.5 flex min-h-0 flex-1 flex-col bg-[#262626]">
            <div className="flex shrink-0 items-center pt-3.5 pr-[30px] pl-[11px]">
                <div className="flex h-[60px] flex-1">
                    <div className="relative flex-[1544] rounded-lg border-4 border-[#666] bg-[#2e2e2e]">
                        <div className="mx-1 mt-1 h-1 bg-[#467863]" />
                        <div className="absolute top-0 bottom-0 left-3.5 w-0.5 bg-[#d03c36]" />
                        <div className="absolute top-0.5 -left-2 flex h-12 w-3.5 justify-center gap-0.5 rounded bg-[#666] py-1.5">
                            <div className="w-0.5 bg-[#3a3a3a]" />
                            <div className="w-0.5 bg-[#3a3a3a]" />
                        </div>
                        <div className="absolute top-0.5 -right-2 z-10 flex h-12 w-3.5 justify-center gap-0.5 rounded bg-[#666] py-1.5">
                            <div className="w-0.5 bg-[#3a3a3a]" />
                            <div className="w-0.5 bg-[#3a3a3a]" />
                        </div>
                    </div>
                    <div className="my-0.5 flex-[144] bg-black" />
                </div>
                <button type="button" aria-label="Zoom out full" className="ml-[26px]"><ZoomOutFull /></button>
            </div>
            <div className="flex h-[86px] shrink-0 items-end pr-[52px] pl-2.5">
                <div className="flex w-[446px] shrink-0 items-center pb-2 pl-0.5">
                    <div className="flex h-11 rounded border-2 border-[#303030] bg-[#1c1c1c]">
                        {headTools.map((icon, i) => (
                            <button
                                key={i}
                                type="button"
                                aria-label={['Inputs and outputs', 'Effects', 'Sends', 'EQ'][i]}
                                className={clsx(
                                    'flex w-[42px] items-center justify-center',
                                    i === 0 ? 'bg-[#161616] text-[#2d8ceb]' : 'border-l-2 border-[#303030]'
                                )}
                            >
                                {icon}
                            </button>
                        ))}
                    </div>
                    <button type="button" aria-label="Metronome" className="mt-1.5 ml-auto">
                        <Icon w={24} h={28}><path d="M8 4h8l6 22H2z" fill="#4a4a4a" stroke="currentColor" strokeWidth="2" /><path d="M0 0l13 18" stroke="currentColor" strokeWidth="2" /></Icon>
                    </button>
                    <button type="button" aria-label="Time stretch" className="mt-1.5 mr-1.5 ml-3.5">
                        <Icon w={28} h={28}>
                            <circle cx="14" cy="12" r="6" fill="none" stroke="currentColor" strokeWidth="2" />
                            <path d="M10 0h8v2h-3v4h-2V2h-3zM0 23l6-4v3h16v-3l6 4-6 4v-3H6v3zM14 12l4-4v4zM6 4l3-1v3z" />
                        </Icon>
                    </button>
                    <div className="mt-1.5 mr-3.5 flex h-[42px] rounded border-2 border-[#303030] bg-[#161616] text-[#2d8ceb]">
                        <button type="button" aria-label="Snapping" className="flex w-10 items-center justify-center">
                            <Icon w={26} h={26}>
                                <path d="M1 14a12 12 0 0 1 24 0l-3 11h-7l2-11a4 4 0 0 0-8 0l2 11H4z" />
                                <path d="M4 18l5-1 1 6-5 1zM22 18l-5-1-1 6 5 1z" fill="#161616" fillOpacity="0.7" />
                            </Icon>
                        </button>
                        <button type="button" aria-label="Playhead" className="flex w-10 items-center justify-center border-l-2 border-[#303030]">
                            <Icon w={14} h={28}><path d="M0 0h14v8l-6 6v14H6V14L0 8z" /></Icon>
                        </button>
                    </div>
                </div>
                <Ruler />
            </div>
            <div className="flex min-h-0 flex-1 pl-2.5">
                <div className="relative min-w-0 flex-1 overflow-hidden border-b-2 border-[#303030]">
                    {tracks.map((track) => (
                        <div key={track.name} className="flex h-[274px] border-b-[6px] border-[#303030]">
                            <TrackHead track={track} />
                            <div className="flex flex-1 bg-[#1c1c1c] pr-0.5">
                                {track.active && <div className="flex flex-1 pt-0.5"><Clip /></div>}
                            </div>
                        </div>
                    ))}
                    <div className="absolute top-0 bottom-0 left-[458px] w-0.5 bg-[#ab1512]" />
                </div>
                <div className="flex w-[52px] shrink-0 flex-col pt-1.5">
                    <div className="relative flex h-[964px] w-9 shrink-0 flex-col gap-1.5 rounded border-4 border-[#646464] bg-[#2d2d2d]">
                        <div className="flex-1 bg-[#65b99b]" />
                        <div className="flex-1 bg-[#574868]" />
                        <div className="flex-1 bg-[#68613e]" />
                        <div className="flex-1 bg-[#3c5553]" />
                        <div className="flex-1 bg-[#613e65]" />
                        <div className="absolute -top-2.5 left-0 flex h-3.5 w-7 flex-col justify-center gap-0.5 rounded bg-[#666] px-1">
                            <div className="h-0.5 bg-[#3a3a3a]" />
                            <div className="h-0.5 bg-[#3a3a3a]" />
                        </div>
                        <div className="absolute -bottom-0.5 left-0 flex h-3.5 w-7 flex-col justify-center gap-0.5 rounded bg-[#666] px-1">
                            <div className="h-0.5 bg-[#3a3a3a]" />
                            <div className="h-0.5 bg-[#3a3a3a]" />
                        </div>
                    </div>
                    <div className="mb-1.5 ml-0.5 flex w-8 flex-1 flex-col gap-1 border-x-2 border-t-2 border-black bg-black">
                        <div className="flex-1 bg-[#2b361e]" />
                        <div className="flex-1 bg-[#14273e]" />
                    </div>
                </div>
            </div>
        </div>
        <div className="mx-0.5 mb-0.5 flex h-[72px] shrink-0 items-center pr-[18px] pb-0.5">
            <span className="w-[446px] pt-2 pl-5 text-[31px] leading-9 text-[#3f9be6]">0:00.282</span>
            {transport.map(([name, icon, color]) => (
                <button key={name} type="button" aria-label={name} className={clsx('flex w-[60px] justify-center', color)}>
                    {icon}
                </button>
            ))}
            <div className="ml-auto flex items-center">
                {zoomTools.map((icon, i) => (
                    <button key={i} type="button" aria-label={`Zoom ${i + 1}`} className="flex w-[60px] justify-center">
                        {icon}
                    </button>
                ))}
            </div>
        </div>
    </section>
);

const EssentialSound = () => (
    <section className="w-[233px] shrink-0 overflow-hidden bg-[#232323] text-[21px] leading-7 whitespace-nowrap text-[#969696]">
        <div className="w-[420px]">
            <div className="flex h-[58px] items-center gap-5 border-b-2 border-[#2b2b2b] pl-6 text-[#c8c8c8]">
                Essential Sound <MenuIcon />
            </div>
            <div className="flex h-[62px] items-center border-b-2 border-[#2b2b2b] pt-2 pl-[22px]">6 - 29.5secs Hero</div>
            <div className="flex h-[71px] items-center border-b-2 border-[#2b2b2b] pb-0.5 pl-[22px]">
                <label htmlFor="preset" className="mr-3">Preset:</label>
                <input id="preset" type="text" className="h-10 flex-1 rounded border-2 border-[#303030] bg-[#1c1c1c]" />
            </div>
            <div className="h-[61px] border-b-2 border-[#2b2b2b]" />
            <p className="mt-11 ml-[42px] text-[26px] leading-[38px] text-[#757575]">
                Assign a Tag to the
                <br />
                the Audio Type.
            </p>
            <div className="mt-5 ml-[42px] flex flex-col gap-5">
                {['Dialogue', 'Music', 'SFX', 'Ambience'].map((tag) => (
                    <button key={tag} type="button" aria-label={tag} className="h-[60px] rounded border-2 border-[#303030] bg-[#1c1c1c]" />
                ))}
            </div>
        </div>
    </section>
);

const bands = [
    { db: 42, color: 'bg-[#36f044]' },
    { db: 12, color: 'bg-[#f4d346]' },
    { db: 4.6, color: 'bg-[#f54545] border-r-2 border-[#f7f032]' },
];

const Levels = () => (
    <section className="min-w-0 flex-1 overflow-hidden bg-[#232323] pr-3 pl-[11px]">
        <div className="flex items-center gap-5 pt-[15px] pl-[13px] text-[21px] leading-7 text-[#b4b4b4]">
            Levels <MenuIcon />
        </div>
        <div className="mt-[23px] flex h-[114px] border-2 border-black bg-[#1c1c1c]">
            <div className="flex flex-1 flex-col gap-0.5">
                {[0, 1].map((c) => (
                    <div key={c} className="flex flex-1">
                        {bands.map((b) => (
                            <div key={b.db} className={b.color} style={{ width: `${(b.db / 60) * 100}%` }} />
                        ))}
                    </div>
                ))}
            </div>
            <div className="flex w-5 flex-col border-l-2 border-black">
                <div className="flex-1 border-b-2 border-black" />
                <div className="flex-1" />
            </div>
        </div>
        <div className="flex pr-[23px] pl-0.5 text-[17px] leading-6">
            {Array.from({ length: 20 }, (_, i) => (
                <div key={i} className="relative flex h-10 flex-1 text-[#7c7c7c]">
                    <div className="h-2 flex-1 border-l-2 border-current" />
                    <div className="h-1 flex-1 border-l-2 border-current" />
                    <div className="h-1 flex-1 border-l-2 border-current" />
                    <span className={clsx('absolute top-3 text-[#969696]', i === 0 ? '-left-0.5' : 'left-0.5 -translate-x-1/2')}>
                        {i === 0 ? 'dB' : i * 3 - 60}
                    </span>
                    {i === 19 && (
                        <>
                            <div className="absolute top-0 left-full h-2 w-0.5 bg-current" />
                            <span className="absolute top-3 left-full -translate-x-1/2 text-[#969696]">0</span>
                        </>
                    )}
                </div>
            ))}
        </div>
    </section>
);

const App = () => (
    <div className={clsx('h-screen bg-linear-to-b from-[#22349c] to-[#237f33] to-50% pb-2', SANS)}>
        <div className="flex h-full flex-col overflow-hidden rounded-tl-xl rounded-bl-2xl border-b-2 border-l-2 border-[#4c4c4c] bg-[#161616] text-[#b4b4b4]">
            <header className="relative flex h-[33px] shrink-0 items-center border-b border-black bg-[#353638] pb-1.5">
                <div className="flex gap-3 pl-2">
                    <div className="h-[18px] w-[18px] rounded-full bg-[#ff5f57]" />
                    <div className="h-[18px] w-[18px] rounded-full bg-[#febc2e]" />
                    <div className="h-[18px] w-[18px] rounded-full bg-[#28c840]" />
                </div>
                <h1 className="absolute inset-x-0 top-0 pl-[640px] text-center font-['Inter',sans-serif] text-[22px] leading-6 text-[#b8b8b8]">Adobe Audition</h1>
            </header>
            <TopToolbar />
            <main className="flex min-h-0 flex-1 gap-2 pt-2">
                <div className="flex w-[772px] shrink-0 flex-col gap-2">
                    <FilesPanel />
                    <MediaBrowser />
                    <HistoryPanel />
                </div>
                <div className="flex min-w-0 flex-1 flex-col gap-2">
                    <div className="flex min-h-0 flex-1 gap-2">
                        <EditorPanel />
                        <EssentialSound />
                    </div>
                    <div className="flex h-[220px] shrink-0 gap-2">
                        <Levels />
                        <div className="w-[19px] shrink-0 bg-[#232323]" />
                    </div>
                </div>
            </main>
            <footer className="mt-1 flex h-[38px] shrink-0 items-center bg-[#232323] pl-3.5 text-[21px] leading-7 whitespace-nowrap text-[#969696]">
                Stopped
                <div className="ml-auto h-[34px] w-[99px] border-l-2 border-[#303030]" />
                <div className="h-[34px] w-[203px] border-l-2 border-[#303030]" />
                <div className="flex h-[34px] w-[182px] items-center overflow-hidden border-l-2 border-[#303030] pl-3.5">
                    48000 Hz ● 32-bit
                </div>
            </footer>
        </div>
    </div>
);

export default App;
